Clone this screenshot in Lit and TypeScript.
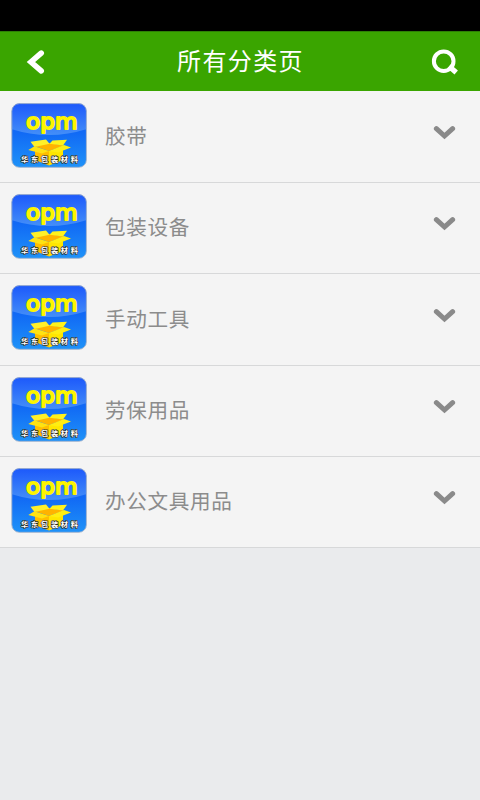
import { LitElement, html, css } from "lit";
import { customElement } from "lit/decorators.js";

@customElement("category-logo")
class CategoryLogo extends LitElement {
  static styles = css`
    :host { display: block; width: 76px; height: 65px; }
    svg { display: block; }
    .brand { font: 400 20.5px "DejaVu Sans", sans-serif; fill: #fdf500; stroke: #fdf500; stroke-width: 1.8; stroke-linejoin: round; }
    .caption { font: 700 7.2px "Noto Sans CJK SC", sans-serif; fill: #fff; stroke: #30302a; stroke-width: 1.3; stroke-linejoin: round; paint-order: stroke; }
  `;
  render() {
    return html`<svg width="76" height="65" viewBox="0 0 76 65">
      <defs>
        <linearGradient id="base" x2="0" y2="1">
          <stop offset="0" stop-color="#1b5cf8" />
          <stop offset=".45" stop-color="#1169f5" />
          <stop offset="1" stop-color="#1f93f8" />
        </linearGradient>
        <linearGradient id="gloss" gradientUnits="userSpaceOnUse" x1="0" y1="0" x2="0" y2="32">
          <stop offset="0" stop-color="#1c58fb" />
          <stop offset="1" stop-color="#448ff8" />
        </linearGradient>
        <clipPath id="tile"><rect x=".8" y=".6" width="74.6" height="63.7" rx="7.5" /></clipPath>
      </defs>
      <g clip-path="url(#tile)">
        <rect width="76" height="65" fill="url(#base)" />
        <path d="M0 0H76V26Q38 38 0 26Z" fill="url(#gloss)" />
        <path d="M24 46L38 48V62.5L24 57Z" fill="#ffbd00" />
        <path d="M38 48L52 45V57L38 62.5Z" fill="#ffe600" />
        <path d="M23 43L38 40L53 42.5L38 48Z" fill="#ffb300" />
        <path d="M19.5 38.8L35 36.6L38.5 40.7L23.5 44Z" fill="#fff02a" />
        <path d="M41.5 37.5L56 36.8L52 42.5L38.5 40.7Z" fill="#fff21c" />
        <path d="M23.5 43.3L38 48L31 50.5L17.3 47Z" fill="#ffe212" />
        <path d="M53 42L60 44.5L47 49.5L38 48Z" fill="#ffee12" />
      </g>
      <rect x=".8" y=".6" width="74.6" height="63.7" rx="7.5" fill="none" stroke="#a4b3cc" stroke-width=".9" />
      <text class="brand" x="15" y="26" textLength="51.5" lengthAdjust="spacingAndGlyphs">opm</text>
      <text class="caption" x="10" y="59.3" textLength="57">华东包装材料</text>
    </svg>`;
  }
}

@customElement("category-row")
class CategoryRow extends LitElement {
  static properties = { label: { type: String } };
  declare label: string;
  static styles = css`
    :host { display: flex; box-sizing: border-box; height: 91.35px; padding: 11px 23px 0 11px; background: #f4f4f4; border-bottom: 1.5px solid #d7d8d9; }
    .label { flex: 1; margin: 17.5px 0 0 18px; font: 400 20.6px/30px "Noto Sans CJK SC", sans-serif; letter-spacing: .65px; color: #8c8c8c; white-space: nowrap; }
    .arrow { margin-top: 22.5px; width: 24px; height: 16px; }
  `;
  render() {
    return html`<category-logo></category-logo>
      <span class="label">${this.label}</span>
      <svg class="arrow" viewBox="0 0 24 16"><path d="M3.4 3.7L11.5 11L19.6 3.7" fill="none" stroke="#8a8a8a" stroke-width="5" stroke-linecap="round" stroke-linejoin="miter" /></svg>`;
  }
}

@customElement("app-root")
class AppRoot extends LitElement {
  static styles = css`
    :host { display: block; height: 800px; background: #eaebed; overflow: hidden; }
    .status { height: 31px; background: #000; }
    header { display: flex; align-items: center; justify-content: space-between; box-sizing: border-box; height: 60px; padding: 0 20px; background: #3aa500; border-top: 1px solid #2d8005; }
    h1 { margin: 0 0 4px 1px; font: 400 24px/36px "Noto Sans CJK SC", sans-serif; letter-spacing: 1.4px; color: #fff; }
    .icon { width: 32px; height: 32px; }
    main { padding-top: .5px; background: #f4f4f4; }
  `;
  private categories = ["胶带", "包装设备", "手动工具", "劳保用品", "办公文具用品"];
  render() {
    return html`<div class="status"></div>
      <header>
        <svg class="icon" viewBox="0 0 32 32"><path d="M21.2 7.2L11 16L21.2 24.8" fill="none" stroke="#fff" stroke-width="5.6" stroke-linecap="round" /></svg>
        <h1>所有分类页</h1>
        <svg class="icon" viewBox="0 0 32 32"><g fill="none" stroke="#fff"><circle cx="15.7" cy="15.2" r="9.8" stroke-width="4" /><path d="M21 20.3L28.2 26.5" stroke-width="5.2" /></g></svg>
      </header>
      <main>${this.categories.map((name) => html`<category-row .label=${name}></category-row>`)}</main>`;
  }
}
